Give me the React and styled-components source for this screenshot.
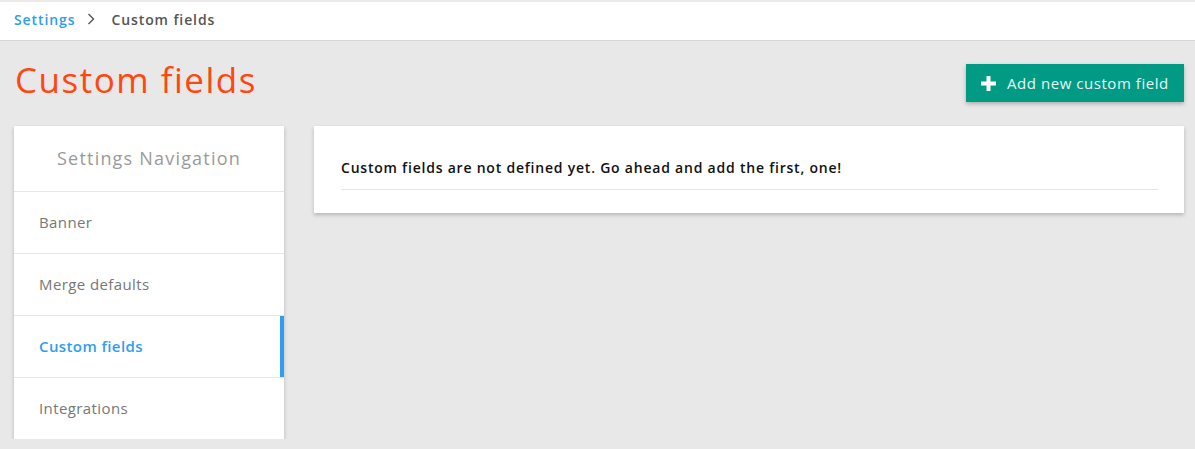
import React from 'react';
import styled, { createGlobalStyle } from 'styled-components';

const Global = createGlobalStyle`
    html, body {
        margin: 0;
        padding: 0;
        background: #e8e8e8;
        font-family: "Open Sans", "Liberation Sans", sans-serif;
    }
`;

const TopBar = styled('header')`
    box-sizing: border-box;
    height: 41px;
    background: #fff;
    border-top: 2px solid #eaeaea;
    border-bottom: 1px solid #d6d6d6;
    display: flex;
    align-items: center;
    padding: 0 14px 4px;
    font-size: 14px;
    font-weight: 600;
    letter-spacing: 0.9px;
`;

const Crumb = styled('span')`
    color: ${props => props.active ? '#2d9ef0' : '#555'};
`;

const Sep = styled('span')`
    display: flex;
    margin: 0 16px 0 12px;
    color: #555;
`;

const Page = styled('main')`
    padding: 0 11px 0 14px;
`;

const TitleRow = styled('div')`
    display: flex;
    justify-content: space-between;
    align-items: flex-start;
    padding-top: 18px;
    height: 67px;
`;

const Title = styled('h1')`
    margin: 1px 0 0 1px;
    font-size: 35px;
    font-weight: 400;
    letter-spacing: 1.5px;
    color: #ff4710;
    line-height: 40px;
`;

const AddButton = styled('button')`
    margin-top: 5px;
    height: 38px;
    width: 218px;
    border: none;
    background: #009a85;
    color: #e6f6f3;
    font-family: inherit;
    font-size: 15px;
    letter-spacing: 0.55px;
    display: flex;
    align-items: center;
    gap: 11px;
    padding: 0 15px;
    box-shadow: 0 2px 4px rgba(0,0,0,.25);
`;

const Columns = styled('div')`
    display: flex;
    align-items: flex-start;
    gap: 30px;
`;

const Card = styled('section')`
    background: #fff;
    box-shadow: 0 2px 4px rgba(0,0,0,.22);
`;

const Nav = styled(Card)`
    width: 270px;
    flex: none;
`;

const NavHead = styled('div')`
    height: 66px;
    box-sizing: border-box;
    padding-bottom: 1px;
    display: flex;
    align-items: center;
    justify-content: center;
    font-size: 18px;
    letter-spacing: 1.2px;
    color: #9a9a9a;
    border-bottom: 1px solid #e6e6e6;
`;

const NavItem = styled('div')`
    height: ${props => props.last ? '61px' : '62px'};
    box-sizing: border-box;
    display: flex;
    align-items: center;
    padding: 0 0 2px 25px;
    font-size: 15px;
    letter-spacing: 0.4px;
    color: ${props => props.active ? '#2d9ef0' : '#777'};
    font-weight: ${props => props.active ? 600 : 400};
    border-bottom: ${props => props.last ? 'none' : '1px solid #e6e6e6'};
    box-shadow: ${props => props.active ? 'inset -4px 0 0 #2d9ef0' : 'none'};
`;

const Content = styled(Card)`
    flex: 1;
    padding: 32px 26px 23px 27px;
`;

const Empty = styled('p')`
    margin: 0;
    font-size: 14px;
    font-weight: 600;
    letter-spacing: 0.78px;
    color: #111;
    padding-bottom: 12px;
    border-bottom: 1px solid #e6e6e6;
`;

const navItems = ['Banner', 'Merge defaults', 'Custom fields', 'Integrations'];

export default function App() {
    return (
        <>
            <Global />
            <TopBar>
                <Crumb active>Settings</Crumb>
                <Sep>
                    <svg width="8" height="12" viewBox="0 0 8 12"><path d="M1.5 1l5 5-5 5" fill="none" stroke="currentColor" strokeWidth="1.4" /></svg>
                </Sep>
                <Crumb>Custom fields</Crumb>
            </TopBar>
            <Page>
                <TitleRow>
                    <Title>Custom fields</Title>
                    <AddButton>
                        <svg width="15" height="15" viewBox="0 0 15 15"><path d="M5.5 0h4v5.5H15v4H9.5V15h-4V9.5H0v-4h5.5z" fill="#fff" /></svg>
                        Add new custom field
                    </AddButton>
                </TitleRow>
                <Columns>
                    <Nav>
                        <NavHead>Settings Navigation</NavHead>
                        {navItems.map((item, i) => (
                            <NavItem key={item} active={item === 'Custom fields'} last={i === navItems.length - 1}>{item}</NavItem>
                        ))}
                    </Nav>
                    <Content>
                        <Empty>Custom fields are not defined yet. Go ahead and add the first, one!</Empty>
                    </Content>
                </Columns>
            </Page>
        </>
    );
}
